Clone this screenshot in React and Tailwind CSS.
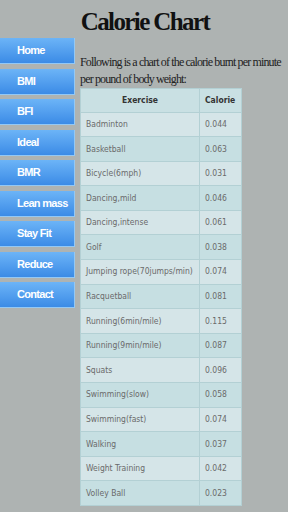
const navItems = ["Home", "BMI", "BFI", "Ideal", "BMR", "Lean mass", "Stay Fit", "Reduce", "Contact"];

const rows = [
  ["Badminton", "0.044"],
  ["Basketball", "0.063"],
  ["Bicycle(6mph)", "0.031"],
  ["Dancing,mild", "0.046"],
  ["Dancing,intense", "0.061"],
  ["Golf", "0.038"],
  ["Jumping rope(70jumps/min)", "0.074"],
  ["Racquetball", "0.081"],
  ["Running(6min/mile)", "0.115"],
  ["Running(9min/mile)", "0.087"],
  ["Squats", "0.096"],
  ["Swimming(slow)", "0.058"],
  ["Swimming(fast)", "0.074"],
  ["Walking", "0.037"],
  ["Weight Training", "0.042"],
  ["Volley Ball", "0.023"],
];

export default function App() {
  return (
    <div className="w-[288px] h-[512px] overflow-hidden bg-[#aeb3b2]">
      <div className="h-[37px] flex items-end justify-center">
        <h1 className="font-['Liberation_Serif',serif] font-bold text-[25px] leading-[30px] tracking-[-1.6px] text-[#111] pl-[2px]">
          Calorie Chart
        </h1>
      </div>

      <div className="flex">
        <nav className="w-[75px] flex flex-col gap-[4.5px] pt-px">
          {navItems.map((item) => (
            <div
              key={item}
              className="h-[26px] flex items-center pl-[17px] whitespace-nowrap bg-gradient-to-b from-[#6cb4f7] to-[#3b8be6] border-r border-b border-[#93c8f5] text-white font-bold text-[11px] tracking-[-0.7px] font-['Liberation_Sans',Arial,sans-serif]"
            >
              {item}
            </div>
          ))}
        </nav>

        <div className="flex-1 pl-[5px] pt-[17px]">
          <p className="font-['Liberation_Serif',serif] text-[12px] leading-[17px] tracking-[-0.85px] text-[#222]">
            Following is a chart of the calorie burnt per minute per pound of body weight:
          </p>

          <table className="w-[162px] border-collapse font-['DejaVu_Sans_Condensed','DejaVu_Sans',sans-serif] text-[8.5px]">
            <thead>
              <tr className="h-[23.5px] bg-[#c9e0e3]">
                <th className="w-[119px] border border-[#b3d0d4] text-center font-bold text-[#333]">Exercise</th>
                <th className="border border-[#b3d0d4] text-left pl-[5px] font-bold text-[#333]">Calorie</th>
              </tr>
            </thead>
            <tbody>
              {rows.map(([name, val], i) => (
                <tr key={name} className={`h-[24.6px] ${i % 2 === 0 ? "bg-[#d5e5e8]" : "bg-[#c6dfe2]"}`}>
                  <td className="border border-[#b3d0d4] pl-[5px] text-[#6a6a6a]">{name}</td>
                  <td className="border border-[#b3d0d4] pl-[5px] text-[#6a6a6a]">{val}</td>
                </tr>
              ))}
            </tbody>
          </table>
        </div>
      </div>
    </div>
  );
}
